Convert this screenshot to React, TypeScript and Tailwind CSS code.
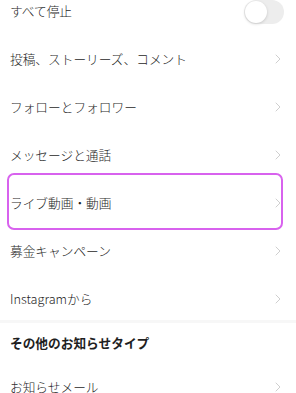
import React from "react";

const font = { fontFamily: '"Noto Sans CJK JP", "Noto Sans", sans-serif' };

function Chevron() {
  return (
    <svg width="6" height="10" viewBox="0 0 6 10" className="shrink-0">
      <path d="M1 1 L5 5 L1 9" fill="none" stroke="#cfcfcf" strokeWidth="1" strokeLinecap="round" strokeLinejoin="round" />
    </svg>
  );
}

function Row({ label }: { label: string }) {
  return (
    <div className="flex h-12 items-center justify-between pl-[10px] pr-[15px]">
      <span className="text-[12.7px] font-light text-[#1f1f1f]">{label}</span>
      <Chevron />
    </div>
  );
}

export default function App() {
  const items = [
    "投稿、ストーリーズ、コメント",
    "フォローとフォロワー",
    "メッセージと通話",
    "ライブ動画・動画",
    "募金キャンペーン",
    "Instagramから",
  ];
  return (
    <div className="relative h-[393px] w-[296px] overflow-hidden bg-white" style={font}>
      <div className="-mt-[13px]">
        <div className="flex h-12 items-center justify-between pl-[10px] pr-[12px]">
          <span className="text-[12.7px] font-light text-[#1f1f1f]">すべて停止</span>
          <div className="relative mt-[1px] h-[24px] w-[40px] rounded-full bg-[#ededed]">
            <div className="absolute left-[1px] top-[1px] h-[22px] w-[22px] rounded-full bg-white shadow-[0_1px_3px_rgba(0,0,0,0.16)]" />
          </div>
        </div>
        {items.map((l) => (
          <Row key={l} label={l} />
        ))}
        <div className="h-[3px] bg-[#f7f7f7] -mt-[3px]" />
        <div className="flex h-[40px] items-center pl-[10px]">
          <span className="text-[12.7px] font-bold text-[#1f1f1f]">その他のお知らせタイプ</span>
        </div>
        <Row label="お知らせメール" />
      </div>
      <div className="pointer-events-none absolute left-[7px] top-[173px] h-[57px] w-[276px] rounded-[7px] border-2 border-[#d862ee]" />
    </div>
  );
}
